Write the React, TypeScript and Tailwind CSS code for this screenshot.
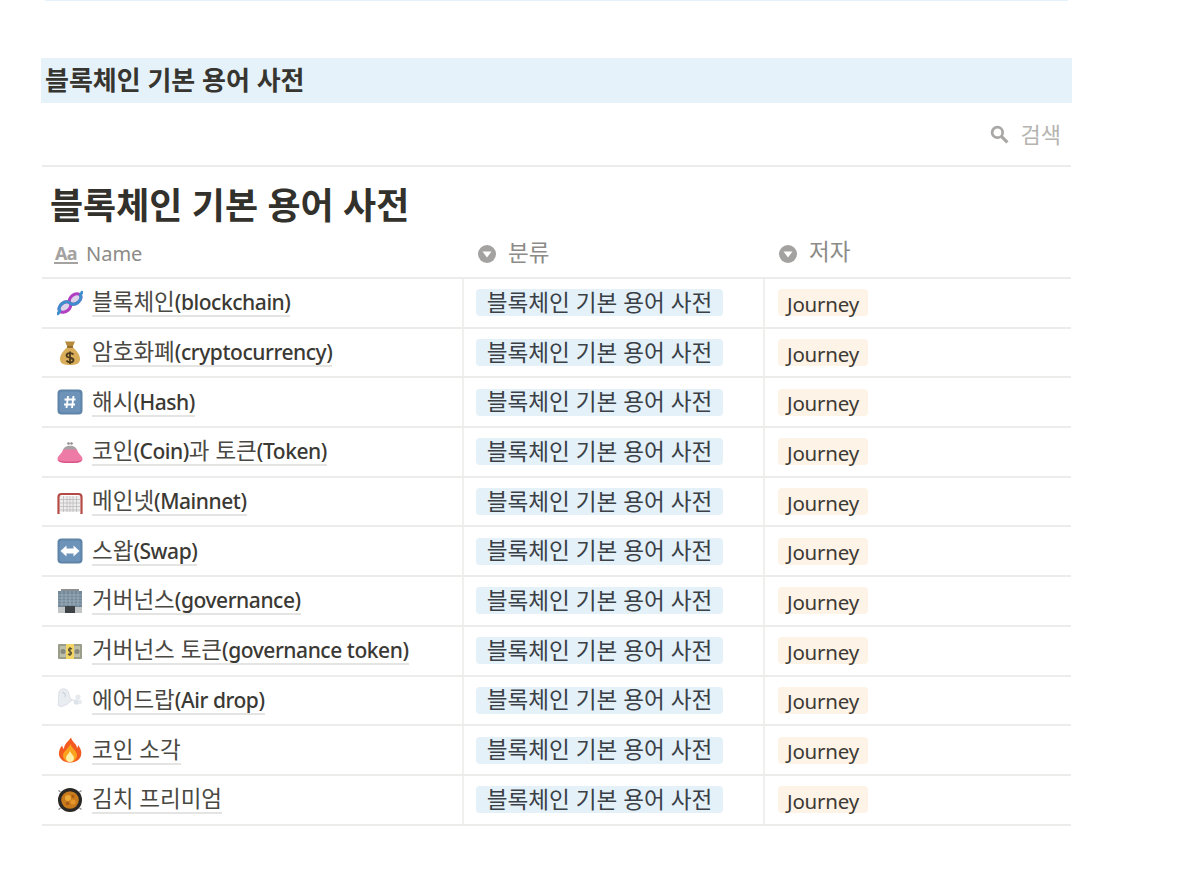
import type { ReactNode } from 'react';

const Dna = () => (
  <svg viewBox="0 0 26 26" className="w-[26px] h-[26px]">
    <g transform="rotate(-38 13 13) translate(13 13)">
      <ellipse cx="-6.500" cy="0" rx="6.500" ry="4.500" fill="#dcd3ea" stroke="#b23fc2" strokeWidth="3" />
      <ellipse cx="6.500" cy="0" rx="6.500" ry="4.500" fill="#dcd3ea" stroke="#b23fc2" strokeWidth="3" />
      <path d="M-13 0 A6.500 4.500 0 0 1 0 0 A6.500 4.500 0 0 0 13 0" fill="none" stroke="#3e8ecb" strokeWidth="3" />
      <path d="M-16 1 L-13 0 M13 0 L16 -1" stroke="#3e8ecb" strokeWidth="3" strokeLinecap="round" />
    </g>
  </svg>
);

const MoneyBag = () => (
  <svg viewBox="0 0 26 26" className="w-[26px] h-[26px]">
    <path d="M8 1.500 L18 1.500 L15.500 7 L10.500 7 Z" fill="#b58a3c" />
    <path d="M10.500 7 L15.500 7 C20 11 23 15 23 19 C23 23.500 19.500 25 13 25 C6.500 25 3 23.500 3 19 C3 15 6 11 10.500 7 Z" fill="#d9ad5a" />
    <path d="M10 7 H16" stroke="#7c5a22" strokeWidth="1.400" />
    <path d="M16.500 14.500 C15 12.500 9.500 12.500 9.500 15.500 C9.500 18.500 16.500 17 16.500 20 C16.500 23 11 23 9.500 20.500 M13 11.500 V24" fill="none" stroke="#4c3a1c" strokeWidth="1.800" />
  </svg>
);

const HashKey = () => (
  <svg viewBox="0 0 26 26" className="w-[26px] h-[26px]">
    <rect x="0.500" y="0.500" width="25" height="25" rx="4" fill="#5f84a8" />
    <rect x="2.500" y="2.500" width="21" height="21" rx="2.500" fill="#6d93b8" />
    <path d="M11 7 L9.500 19 M16.500 7 L15 19 M7.500 10.500 H18.500 M7 15.500 H18" stroke="#fff" strokeWidth="1.900" />
  </svg>
);

const Purse = () => (
  <svg viewBox="0 0 26 26" className="w-[26px] h-[26px]">
    <path d="M6 12 C6 5 20 5 20 12 Z" fill="#a8a2a4" />
    <circle cx="11.500" cy="4.500" r="1.300" fill="#8f8a8c" />
    <circle cx="14.500" cy="4.500" r="1.300" fill="#8f8a8c" />
    <path d="M6 10.500 H20 C21 15 25.500 16.500 25.500 20 C25.500 23.500 21 24 13 24 C5 24 0.500 23.500 0.500 20 C0.500 16.500 5 15 6 10.500 Z" fill="#ee7ba6" />
    <path d="M1 21 C6 23 20 23 25 21 C24.500 23.500 20 24 13 24 C6 24 1.500 23.500 1 21 Z" fill="#d95588" />
  </svg>
);

const GoalNet = () => (
  <svg viewBox="0 0 26 26" className="w-[26px] h-[26px]">
    <rect x="3" y="7" width="20" height="16" fill="#eeeded" />
    <path d="M6.500 7 V23 M10 7 V23 M13 7 V23 M16 7 V23 M19.500 7 V23 M3 10.500 H23 M3 14 H23 M3 17.500 H23 M3 21 H23" stroke="#bdbbbb" strokeWidth="0.800" />
    <path d="M1.500 25 V8 C1.500 6 3 5 4.500 5 H21.500 C23 5 24.500 6 24.500 8 V25" fill="none" stroke="#b34a45" strokeWidth="2.200" />
  </svg>
);

const SwapKey = () => (
  <svg viewBox="0 0 26 26" className="w-[26px] h-[26px]">
    <rect x="0.500" y="0.500" width="25" height="25" rx="4" fill="#5f84a8" />
    <rect x="2.500" y="2.500" width="21" height="21" rx="2.500" fill="#6d93b8" />
    <path d="M3.500 13 L9.500 7.500 V10.500 H16.500 V7.500 L22.500 13 L16.500 18.500 V15.500 H9.500 V18.500 Z" fill="#fff" />
  </svg>
);

const Office = () => (
  <svg viewBox="0 0 26 26" className="w-[26px] h-[26px]">
    <rect x="4" y="1" width="18" height="2" fill="#8b8f92" />
    <rect x="1" y="3" width="24" height="18" fill="#73899a" />
    <path d="M1 7 H25 M1 10 H25 M1 13 H25 M1 16 H25 M5 3 V18 M9 3 V18 M13 3 V18 M17 3 V18 M21 3 V18" stroke="#9fb0bc" strokeWidth="0.800" />
    <rect x="1" y="19" width="24" height="6" fill="#c2c5c6" />
    <rect x="8" y="18" width="10" height="7" fill="#3d4347" />
  </svg>
);

const Banknote = () => (
  <svg viewBox="0 0 26 26" className="w-[26px] h-[26px]">
    <rect x="1" y="6" width="24" height="15" rx="1" fill="#9a9d8a" />
    <rect x="3" y="8" width="20" height="11" fill="#bcbea9" />
    <circle cx="6" cy="13.500" r="2.500" fill="#85887a" />
    <circle cx="20" cy="13.500" r="2.500" fill="#85887a" />
    <rect x="9" y="6" width="8" height="15" fill="#f3d564" />
    <path d="M15 11 C14 10 11.500 10 11.500 12 C11.500 14 14.500 13 14.500 15 C14.500 17 12 17 11 16 M13 9 V18" fill="none" stroke="#5a5036" strokeWidth="1.200" />
  </svg>
);

const Dash = () => (
  <svg viewBox="0 0 26 26" className="w-[26px] h-[26px]">
    <path d="M2 5 C3 1 9 1 11 4 C13 8 12 11 15 13 C12 15 11 18 8 18 C6 20 2 20 1 18 C2 14 1 9 2 5 Z" fill="#e9edf2" stroke="#d5dbe3" strokeWidth="0.800" />
    <path d="M5 6 C7 5 9 7 8 10" fill="none" stroke="#cdd4dd" strokeWidth="1.200" />
    <path d="M13 13 H17" stroke="#dde2e8" strokeWidth="1.400" />
    <circle cx="21" cy="10" r="2.600" fill="#e6eaef" />
    <circle cx="19.500" cy="15" r="2.800" fill="#dfe4ea" />
    <circle cx="23" cy="15" r="2.200" fill="#e9edf1" />
  </svg>
);

const Fire = () => (
  <svg viewBox="0 0 26 26" className="w-[26px] h-[26px]">
    <path d="M14 0.500 C15 5 20 7 20 11 C21 10 21 9 21 8 C24 12 25 15 24 18.500 C23 23 18 25.500 13 25.500 C8 25.500 3 23 2 18 C1.500 14 3 11 5 8.500 C5.500 10 6 11 7 12 C7 7 11 5 14 0.500 Z" fill="#f25a1f" />
    <path d="M13.500 7 C14.500 11 19.500 13 20 18 C20 22 17 25 13 25 C9 25 6 22 6 18.500 C6 14.500 11 12 13.500 7 Z" fill="#fba31f" />
    <path d="M13 14 C14 17 17 18.500 17 21 C17 23.500 15 25 13 25 C11 25 9 23.500 9 21 C9 18.500 12 17 13 14 Z" fill="#fff0a8" />
  </svg>
);

const Pan = () => (
  <svg viewBox="0 0 26 26" className="w-[26px] h-[26px]">
    <path d="M3.500 5 L1.500 3.500 M22.500 5 L24.500 3.500 M3.500 21 L1.500 22.500 M22.500 21 L24.500 22.500" stroke="#8f8f8f" strokeWidth="1.200" />
    <circle cx="13" cy="13" r="12" fill="#2b2724" />
    <circle cx="13" cy="13" r="8.800" fill="#c97a1c" />
    <circle cx="11" cy="11" r="3" fill="#eda93a" />
    <circle cx="16" cy="15" r="2.600" fill="#e6982c" />
    <circle cx="10.500" cy="16.500" r="1.800" fill="#a85a16" />
    <circle cx="16" cy="9.500" r="1.400" fill="#a85a16" />
  </svg>
);

const rows: { icon: ReactNode; kr: string; en?: string; tail?: { kr: string; en: string } }[] = [
  { icon: <Dna />, kr: '블록체인', en: '(blockchain)' },
  { icon: <MoneyBag />, kr: '암호화폐', en: '(cryptocurrency)' },
  { icon: <HashKey />, kr: '해시', en: '(Hash)' },
  { icon: <Purse />, kr: '코인', en: '(Coin)', tail: { kr: '과 토큰', en: '(Token)' } },
  { icon: <GoalNet />, kr: '메인넷', en: '(Mainnet)' },
  { icon: <SwapKey />, kr: '스왑', en: '(Swap)' },
  { icon: <Office />, kr: '거버넌스', en: '(governance)' },
  { icon: <Banknote />, kr: '거버넌스 토큰', en: '(governance token)' },
  { icon: <Dash />, kr: '에어드랍', en: '(Air drop)' },
  { icon: <Fire />, kr: '코인 소각' },
  { icon: <Pan />, kr: '김치 프리미엄' },
];

const SelectIcon = () => (
  <svg viewBox="0 0 18 18" className="w-[18px] h-[18px] shrink-0">
    <circle cx="9" cy="9" r="9" fill="#a3a2a0" />
    <path d="M4.500 6.500 H13.500 L9 12.500 Z" fill="#fff" />
  </svg>
);

export default function App() {
  return (
    <div className="w-[1200px] h-[869px] bg-white overflow-hidden text-[#37352f] [font-family:'Noto_Sans','Noto_Sans_CJK_KR',sans-serif]">
      <div className="ml-[45px] w-[1023px] h-px bg-[#e5f2f9]" />

      {/* toggle heading */}
      <div className="mt-[57px] ml-[41px] w-[1031px] h-[45px] bg-[#e5f2f9] pl-[4px] flex items-center text-[26px] font-bold text-[#373530]">
        블록체인 기본 용어 사전
      </div>

      <div className="ml-[42px] w-[1029px]">
        {/* search */}
        <div className="h-[64px] border-b-2 border-[#ececeb] flex items-center justify-end pr-[10px] gap-[12px] text-[#b5b4b1] text-[22px]">
          <svg viewBox="0 0 18 18" className="w-[19px] h-[19px]">
            <circle cx="7" cy="7" r="5" fill="none" stroke="#a8a7a5" strokeWidth="2.600" />
            <path d="M11 11 L16.500 16.500" stroke="#a8a7a5" strokeWidth="3" />
          </svg>
          <span>검색</span>
        </div>

        <h1 className="pl-[8px] h-[64px] pt-[13px] flex items-center text-[36px] font-bold text-[#33312c]">
          블록체인 기본 용어 사전
        </h1>

        {/* table header */}
        <div className="h-[48px] border-b-2 border-[#ececeb] flex text-[#8c8b87] text-[20px]">
          <div className="w-[422px] pl-[12px] flex items-center gap-[8px]">
            <span className="w-[24px] text-[18px] leading-[18px] font-bold text-[#a3a2a0] border-b-2 border-[#a3a2a0] flex justify-center tracking-[-0.5px]">Aa</span>
            <span>Name</span>
          </div>
          <div className="w-[301px] pl-[14px] flex items-center gap-[12px] text-[22.500px]">
            <SelectIcon />
            <span className="-mt-[3px]">분류</span>
          </div>
          <div className="pl-[14px] flex items-center gap-[12px] text-[22.500px]">
            <SelectIcon />
            <span className="-mt-[5px]">저자</span>
          </div>
        </div>

        {/* rows */}
        {rows.map((row) => (
          <div key={row.kr} className="h-[49.7px] border-b-2 border-[#ececeb] flex">
            <div className="w-[422px] border-r-2 border-[#f0f0ef] pl-[15px] flex items-center gap-[9px]">
              <span className="w-[26px] flex justify-center shrink-0">{row.icon}</span>
              <span className="text-[22.500px] leading-[26px] mt-[1px] border-b-2 border-[#e4e4e2] whitespace-nowrap text-[#4a4843]">
                {row.kr}
                {row.en && <span className="text-[21px] tracking-[-0.450px] font-medium text-[#3b3934]">{row.en}</span>}
                {row.tail && (
                  <>
                    {row.tail.kr}
                    <span className="text-[21px] tracking-[-0.450px] font-medium text-[#3b3934]">{row.tail.en}</span>
                  </>
                )}
              </span>
            </div>
            <div className="w-[301px] border-r-2 border-[#f0f0ef] pl-[12px] flex items-center">
              <span className="h-[27px] w-[247px] rounded-[4px] bg-[#e4f1f9] flex items-center justify-center text-[22.600px] text-[#3a4046] whitespace-nowrap">
                블록체인 기본 용어 사전
              </span>
            </div>
            <div className="pl-[13px] flex items-center">
              <span className="h-[27px] w-[90px] rounded-[4px] bg-[#fdf3e6] flex items-center justify-center text-[20.500px] tracking-[-0.200px] text-[#3c3934] pt-[3px]">
                Journey
              </span>
            </div>
          </div>
        ))}
      </div>
    </div>
  );
}
